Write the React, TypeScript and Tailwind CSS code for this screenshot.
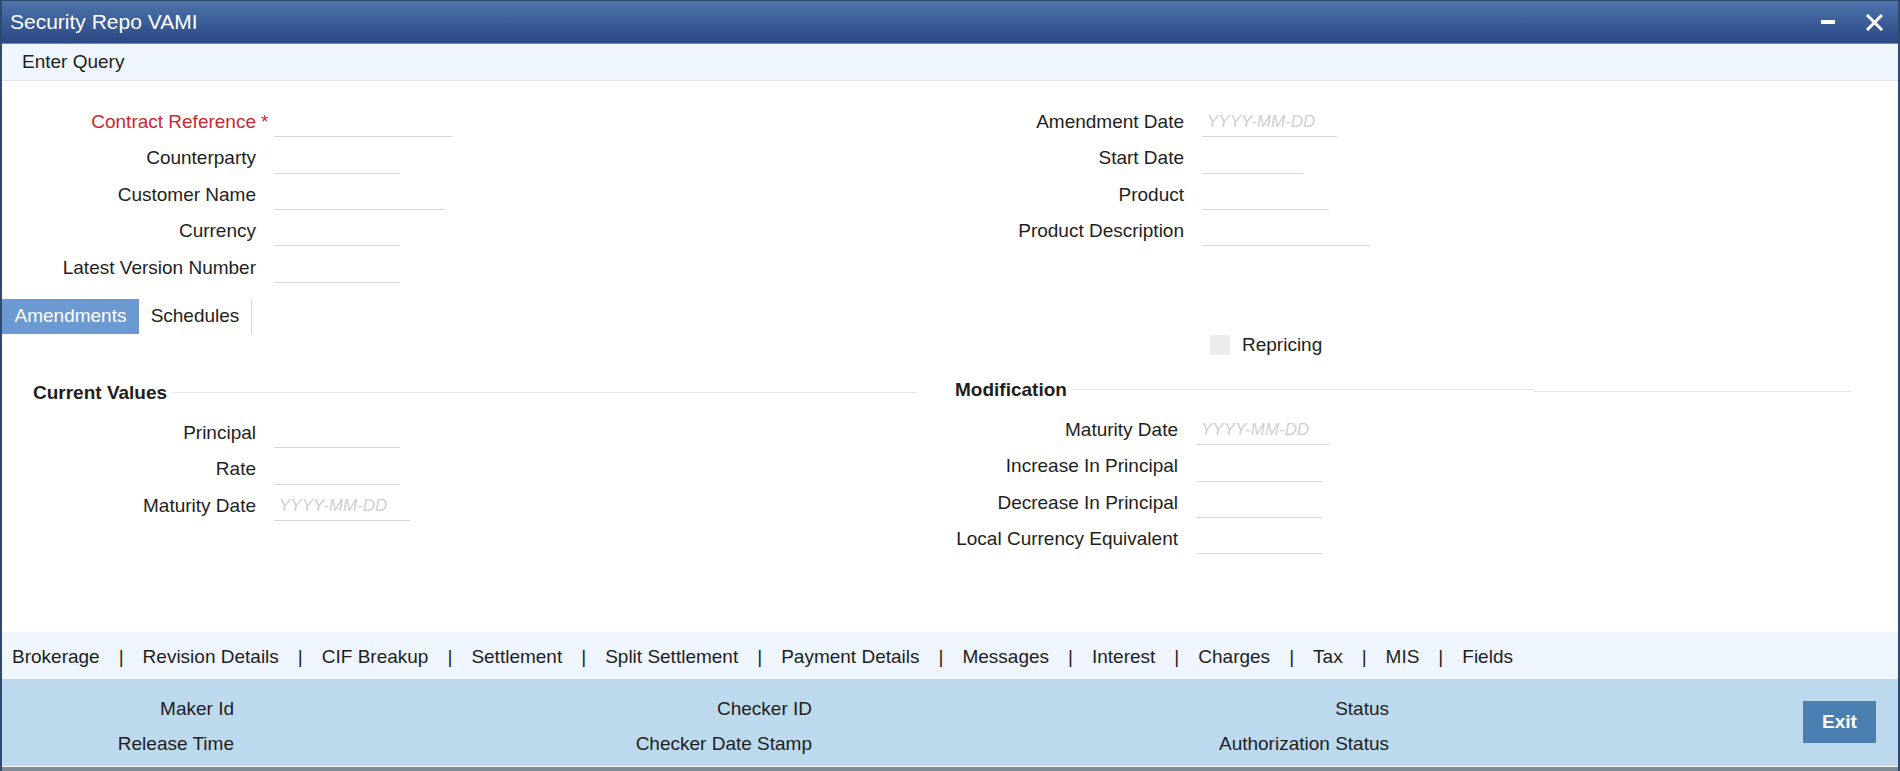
import { ReactNode } from 'react'

const FONT = { fontFamily: '"Liberation Sans", Arial, sans-serif' }

const NAV_ITEMS = [
  'Brokerage',
  'Revision Details',
  'CIF Breakup',
  'Settlement',
  'Split Settlement',
  'Payment Details',
  'Messages',
  'Interest',
  'Charges',
  'Tax',
  'MIS',
  'Fields',
]

// underline-only input like the Oracle form fields
function Field({ width, placeholder }: { width: string; placeholder?: boolean }) {
  return (
    <div className={`${width} h-[30px] border-b border-[#d6d6d6] flex items-center pl-[5px]`}>
      {placeholder && <span className="text-[17px] italic text-[#d0d0d0]">YYYY-MM-DD</span>}
    </div>
  )
}

function Row({
  label,
  labelWidth,
  width,
  placeholder,
  required,
}: {
  label: ReactNode
  labelWidth: string
  width: string
  placeholder?: boolean
  required?: boolean
}) {
  return (
    <div className="h-[36.4px] flex items-center">
      <div className={`${labelWidth} mr-[18px] text-right whitespace-nowrap`}>
        <span className={`relative ${required ? 'text-[#c62a32]' : ''}`}>
          {label}
          {required && <span className="absolute left-full ml-[5px] -top-[3px] text-[#c62a32]">*</span>}
        </span>
      </div>
      <Field width={width} placeholder={placeholder} />
    </div>
  )
}

export default function App() {
  return (
    <div
      style={FONT}
      className="w-[1900px] h-[771px] flex flex-col bg-white text-[19px] text-[#1e1e1e] border-x-2 border-t border-[#2f4a70] overflow-hidden"
    >
      {/* Title bar */}
      <div className="h-[43px] flex items-center justify-between bg-gradient-to-b from-[#4d74ab] to-[#2a4884] border-b border-[#6f87a8] text-white">
        <span className="pl-[8px] text-[21px]">Security Repo VAMI</span>
        <div className="flex items-center gap-[31px] pr-[15px]">
          <div className="w-[14px] h-[4px] bg-white" />
          <svg width="17" height="17" viewBox="0 0 17 17">
            <path d="M2 2 L15 15 M15 2 L2 15" stroke="white" strokeWidth="3" strokeLinecap="square" />
          </svg>
        </div>
      </div>

      {/* Enter Query bar */}
      <div className="h-[37px] flex items-center bg-[#eef5fd] border-b border-[#e1e6ec] pl-[20px]">
        Enter Query
      </div>

      {/* Header fields */}
      <div className="flex pt-[23px]">
        <div className="w-[898px]">
          <Row label="Contract Reference" labelWidth="w-[254px]" width="w-[178px]" required />
          <Row label="Counterparty" labelWidth="w-[254px]" width="w-[126px]" />
          <Row label="Customer Name" labelWidth="w-[254px]" width="w-[171px]" />
          <Row label="Currency" labelWidth="w-[254px]" width="w-[126px]" />
          <Row label="Latest Version Number" labelWidth="w-[254px]" width="w-[126px]" />
        </div>
        <div>
          <Row label="Amendment Date" labelWidth="w-[284px]" width="w-[135px]" placeholder />
          <Row label="Start Date" labelWidth="w-[284px]" width="w-[101px]" />
          <Row label="Product" labelWidth="w-[284px]" width="w-[127px]" />
          <Row label="Product Description" labelWidth="w-[284px]" width="w-[168px]" />
        </div>
      </div>

      {/* Tabs */}
      <div className="flex h-[35px] mt-[13px]">
        <div className="w-[137px] flex items-center justify-center bg-[#6c99d2] text-white">Amendments</div>
        <div className="w-[113px] flex items-center justify-center border-r border-[#d8d8d8]">Schedules</div>
      </div>

      {/* Repricing */}
      <div className="flex items-center h-[22px] pl-[1208px]">
        <div className="w-[20px] h-[20px] bg-[#ececec] mr-[12px]" />
        <span>Repricing</span>
      </div>

      {/* Sections */}
      <div className="flex mt-[19px]">
        <div className="w-[915px] mt-[3px]">
          <div className="h-[30px] flex items-center pl-[31px]">
            <span className="font-bold mr-[4px]">Current Values</span>
            <div className="flex-1 h-px bg-[#e6e6e6]" />
          </div>
          <div className="mt-[7px]">
            <Row label="Principal" labelWidth="w-[254px]" width="w-[126px]" />
            <Row label="Rate" labelWidth="w-[254px]" width="w-[126px]" />
            <Row label="Maturity Date" labelWidth="w-[254px]" width="w-[136px]" placeholder />
          </div>
        </div>
        <div className="w-[896px] ml-[38px]">
          <div className="h-[30px] flex items-center">
            <span className="font-bold mr-[4px]">Modification</span>
            <div className="w-[463px] h-px bg-[#e6e6e6]" />
            <div className="flex-1 h-px bg-[#e6e6e6] mt-[4px]" />
          </div>
          <div className="mt-[7px]">
            <Row label="Maturity Date" labelWidth="w-[223px]" width="w-[134px]" placeholder />
            <Row label="Increase In Principal" labelWidth="w-[223px]" width="w-[126px]" />
            <Row label="Decrease In Principal" labelWidth="w-[223px]" width="w-[126px]" />
            <Row label="Local Currency Equivalent" labelWidth="w-[223px]" width="w-[126px]" />
          </div>
        </div>
      </div>

      <div className="flex-1" />

      {/* Bottom nav */}
      <div className="h-[47px] flex items-center bg-[#eef5fd] pl-[10px] pt-[4px]">
        {NAV_ITEMS.map((item, i) => (
          <div key={item} className="flex items-center">
            {i > 0 && <span className="mx-[19px]">|</span>}
            <span>{item}</span>
          </div>
        ))}
      </div>

      {/* Footer */}
      <div className="h-[87px] flex bg-[#bdd9ed]">
        <div className="grid grid-cols-[232px_578px_577px] grid-rows-[35px_35px] pt-[16px] text-right">
          <div>Maker Id</div>
          <div>Checker ID</div>
          <div>Status</div>
          <div>Release Time</div>
          <div>Checker Date Stamp</div>
          <div>Authorization Status</div>
        </div>
        <button className="ml-auto mr-[22px] mt-[22px] w-[73px] h-[42px] bg-[#4a80b1] text-white font-bold">
          Exit
        </button>
      </div>
      <div className="h-px bg-white" />
      <div className="h-[4px] bg-[#7f8a95]" />
    </div>
  )
}
